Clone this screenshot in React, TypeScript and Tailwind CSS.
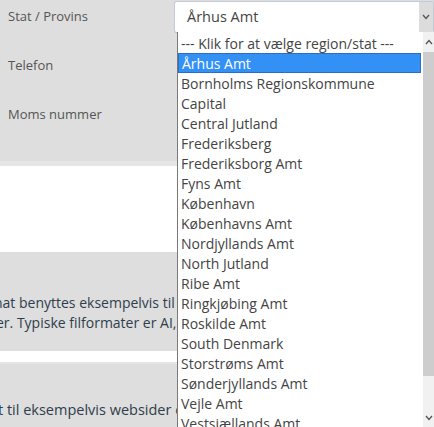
const regions = [
  '--- Klik for at vælge region/stat ---',
  'Århus Amt',
  'Bornholms Regionskommune',
  'Capital',
  'Central Jutland',
  'Frederiksberg',
  'Frederiksborg Amt',
  'Fyns Amt',
  'København',
  'Københavns Amt',
  'Nordjyllands Amt',
  'North Jutland',
  'Ribe Amt',
  'Ringkjøbing Amt',
  'Roskilde Amt',
  'South Denmark',
  'Storstrøms Amt',
  'Sønderjyllands Amt',
  'Vejle Amt',
  'Vestsjællands Amt',
  'Viborg Amt',
];

const Chevron = ({ up }: { up?: boolean }) => (
  <svg width="8" height="6" viewBox="0 0 8 6" className="block">
    <path
      d={up ? 'M1 5 L4 1.5 L7 5' : 'M1 1 L4 4.5 L7 1'}
      fill="none"
      stroke="#555"
      strokeWidth="1.3"
    />
  </svg>
);

const App = () => {
  return (
    <div className="relative w-[434px] h-[427px] overflow-hidden bg-[#dedede] font-['Open_Sans',sans-serif]">
      {/* Form rows */}
      <div className="h-[161px] flex flex-col gap-[16px]">
        <div className="h-[33px] flex items-center">
          <span className="w-[177px] pl-2 text-[13px] text-[#555]">Stat / Provins</span>
          <div className="w-[260px] h-[32px] shrink-0 flex bg-white border border-[#c3ccd6] border-b-[#a7b8cb] rounded-[3px] overflow-hidden">
            <span className="flex-1 pl-3 flex items-center text-[14.5px] text-[#444]">Århus Amt</span>
            <span className="w-[14px] bg-[#dcdcdc] flex items-center justify-center">
              <Chevron />
            </span>
          </div>
        </div>
        <div className="h-[33px] flex items-center">
          <span className="pl-2 text-[13px] text-[#555]">Telefon</span>
        </div>
        <div className="h-[33px] flex items-center">
          <span className="pl-2 text-[13px] text-[#555]">Moms nummer</span>
        </div>
      </div>
      <div className="h-[5px] bg-[#e5e5e5]" />
      <div className="h-[86px] bg-white" />

      {/* Description block, partly hidden behind the open list */}
      <div className="h-[99px] pt-[41px] text-[14px] leading-[20px] text-[#2f3d4c] whitespace-nowrap">
        <div className="w-[177px] overflow-hidden">
          <p className="-ml-[6px]">nat benyttes eksempelvis til tryk</p>
          <p className="-ml-[4px]">er. Typiske filformater er AI, EPS</p>
        </div>
      </div>
      <div className="h-[11px] bg-white" />
      <div className="h-[2px] bg-[#e5e5e5]" />
      <div className="pt-[36px] text-[14.5px] leading-[20px] text-[#2f3d4c] whitespace-nowrap">
        <div className="w-[177px] overflow-hidden">
          <p className="-ml-[2px]">t til eksempelvis websider og</p>
        </div>
      </div>

      {/* Open dropdown list */}
      <div className="absolute left-[177px] top-[32px] w-[257px] h-[395px] flex bg-white border-l border-[#7a7a7a]">
        <div className="flex-1 flex flex-col pt-px">
          {regions.map((r, i) => (
            <div
              key={r}
              className={
                i === 1
                  ? 'h-[20px] shrink-0 mr-[2px] pl-[3px] flex items-center text-[14px] bg-[#3391f5] text-white border border-[#2a6fc4]'
                  : 'h-[20px] shrink-0 pl-[3px] flex items-center text-[14px] text-[#444]'
              }
            >
              {r}
            </div>
          ))}
        </div>
        <div className="w-[11px] flex flex-col bg-[#f1f1f1]">
          <div className="h-[20px] flex items-center justify-center">
            <Chevron up />
          </div>
          <div className="h-[324px] bg-[#cdcdcd]" />
          <div className="flex-1" />
          <div className="h-[16px] flex items-start justify-center pt-[4px]">
            <Chevron />
          </div>
        </div>
      </div>
    </div>
  );
};

export default App;
